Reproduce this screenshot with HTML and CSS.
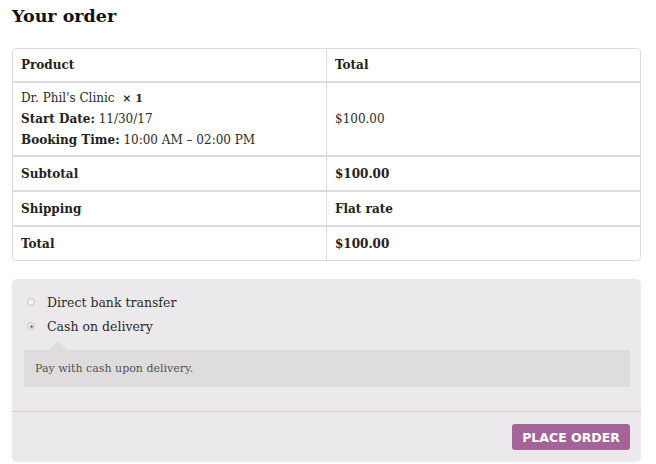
FILE: index.html
```html
<!DOCTYPE html>
<html>
<head>
<meta charset="utf-8">
<link rel="stylesheet" href="styles.css">
</head>
<body>
<div class="page">
  <h3 class="title">Your order</h3>
  <table class="order">
    <thead>
      <tr><th class="col1">Product</th><th>Total</th></tr>
    </thead>
    <tbody>
      <tr class="item">
        <td class="col1">
          <div>Dr. Phil's Clinic&nbsp; <strong class="qty">× 1</strong></div>
          <div><strong>Start Date:</strong> 11/30/17</div>
          <div><strong>Booking Time:</strong> 10:00 AM – 02:00 PM</div>
        </td>
        <td>$100.00</td>
      </tr>
    </tbody>
    <tfoot>
      <tr><th class="col1">Subtotal</th><td><strong>$100.00</strong></td></tr>
      <tr><th class="col1">Shipping</th><td><strong>Flat rate</strong></td></tr>
      <tr><th class="col1">Total</th><td><strong>$100.00</strong></td></tr>
    </tfoot>
  </table>

  <div class="payment">
    <ul class="methods">
      <li class="method"><span class="radio"></span><span>Direct bank transfer</span></li>
      <li class="method"><span class="radio checked"></span><span>Cash on delivery</span></li>
    </ul>
    <div class="desc">Pay with cash upon delivery.</div>
    <div class="place">
      <button class="btn">PLACE ORDER</button>
    </div>
  </div>
</div>
</body>
</html>
```
FILE: styles.css
```css
* { box-sizing: border-box; }
html, body { margin: 0; padding: 0; background: #fff; }
body {
  font-family: "DejaVu Serif", "Liberation Serif", serif;
  font-size: 12px;
  color: #2b2b2b;
}
.page { padding: 0 15px 0 12px; }
.title {
  margin: 0;
  padding-top: 5px;
  height: 48px;
  font-size: 17.5px;
  line-height: 22px;
  font-weight: bold;
  color: #111;
}
.order {
  width: 100%;
  border-collapse: separate;
  border-spacing: 0;
  border: 1px solid #dcdcdc;
  border-radius: 4px;
}
.order th, .order td {
  text-align: left;
  padding: 0 8px;
  vertical-align: middle;
  font-size: 12px;
}
.order thead th { height: 32px; }
.order th { font-weight: bold; color: #222; }
.order strong { font-weight: bold; color: #222; }
.order .col1 { width: 314px; border-right: 1px solid #dcdcdc; }
.order tbody td, .order tfoot th, .order tfoot td {
  border-top: 2px solid #dcdcdc;
}
.order tfoot th, .order tfoot td { height: 35px; }
.order tr.item td { height: 74px; line-height: 21px; }
.qty { font-size: 11px; }
.payment {
  margin-top: 18px;
  background: #ebe9eb;
  border-radius: 5px;
  height: 183px;
}
.methods { list-style: none; margin: 0; padding: 11px 12px 0 12px; }
.method { display: flex; align-items: center; height: 24px; font-size: 12.5px; color: #2b2b2b; }
.radio {
  width: 8px; height: 8px; border-radius: 50%;
  border: 1px solid #c4c1c4; background: #f4f3f4;
  margin: 0 12px 0 3px;
  position: relative;
}
.radio.checked::after {
  content: ""; position: absolute; left: 1.5px; top: 1.5px;
  width: 3px; height: 3px; border-radius: 50%; background: #808080;
}
.desc {
  position: relative;
  margin: 12px 11px 0 12px;
  background: #dfdcde;
  height: 37px;
  line-height: 37px;
  padding-left: 11px;
  font-size: 11px;
  color: #515151;
}
.desc::before {
  content: ""; position: absolute; top: -9px; left: 25px;
  border: 9px solid transparent; border-top: 0; border-bottom: 9px solid #dfdcde;
}
.place {
  margin-top: 24px;
  border-top: 1px solid #d3ced2;
  display: flex; justify-content: flex-end;
  padding: 12px 11px 0 0;
}
.btn {
  background: #a46497; color: #fff; border: 0; border-radius: 3px;
  font-family: "DejaVu Sans", sans-serif; font-weight: bold; font-size: 12.5px;
  width: 118px; height: 26px; padding: 0; letter-spacing: 0;
}
```
